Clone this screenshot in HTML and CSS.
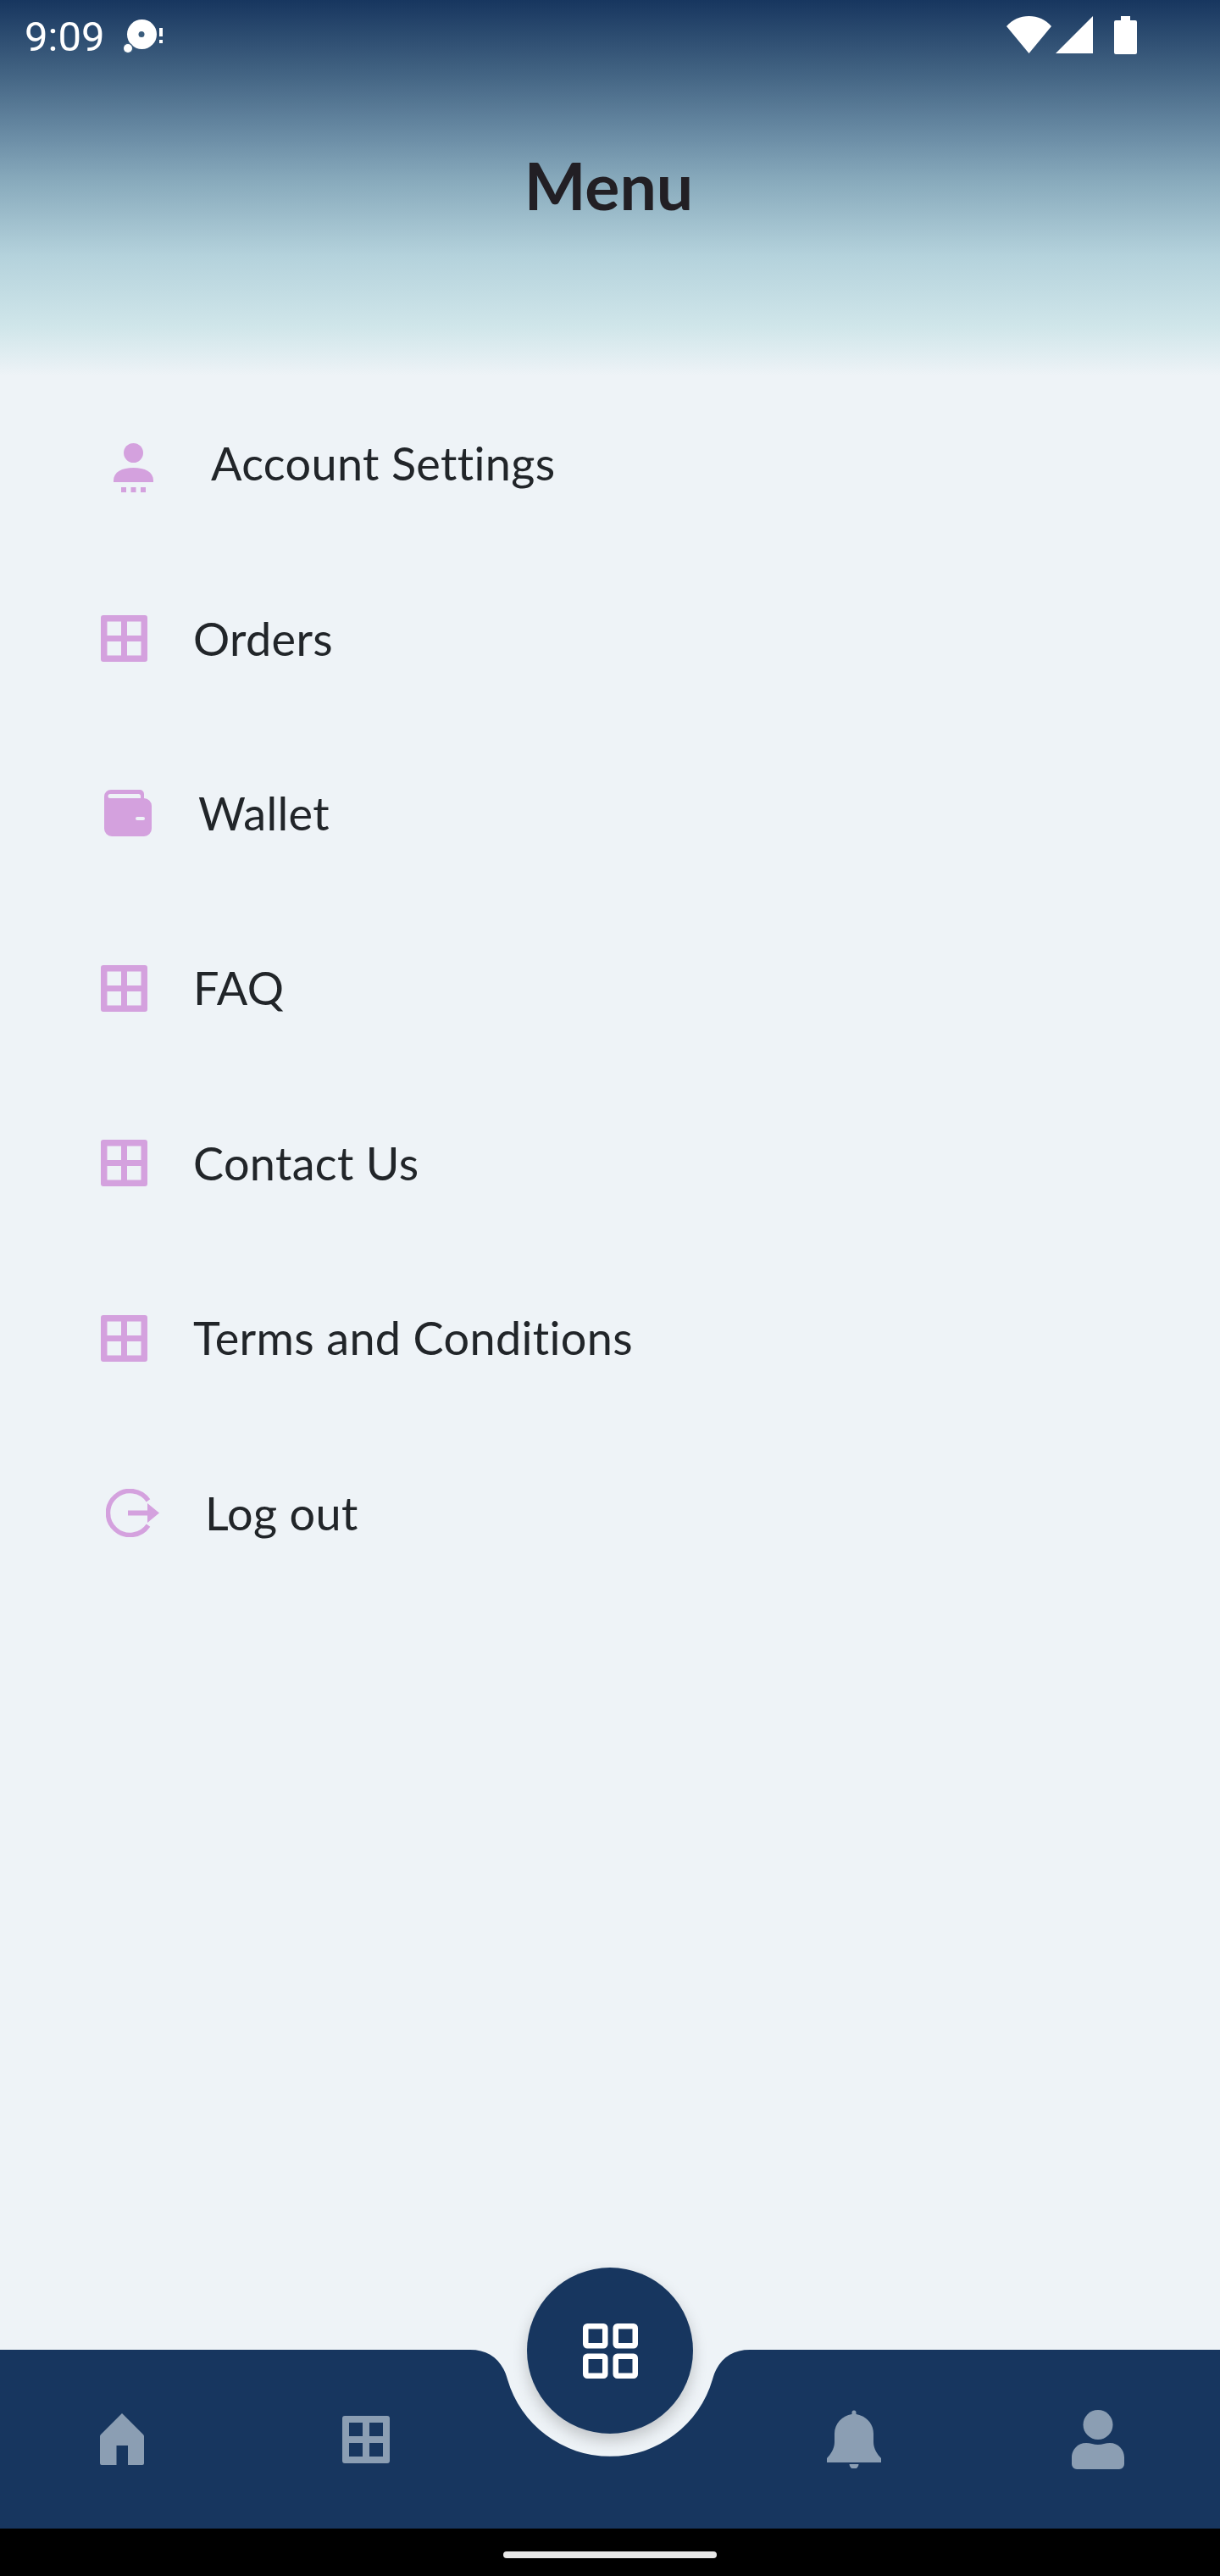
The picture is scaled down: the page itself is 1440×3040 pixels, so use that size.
FILE: index.html
```html
<!DOCTYPE html>
<html lang="en">
<head>
<meta charset="utf-8">
<title>Menu</title>
<link rel="stylesheet" href="styles.css">
</head>
<body>
<div class="screen">
  <header class="header">
    <div class="status">
      <div class="status-left">
        <span class="time">9:09</span>
        <svg class="notif" viewBox="0 0 48 40" width="48" height="40"><circle cx="21.500" cy="17.500" r="17.500" fill="#fff"/><circle cx="21" cy="17.500" r="3.500" fill="#3a5c7c"/><circle cx="5" cy="34" r="6.500" fill="#3f6080"/><circle cx="5" cy="34" r="5" fill="#fff"/><rect x="42" y="10" width="4" height="10" fill="#fff"/><rect x="42" y="24" width="4" height="4" fill="#fff"/></svg>
      </div>
      <div class="status-right">
        <svg viewBox="0 0 53 44" width="53" height="44"><path d="M0 12C7 4 16 0 26.500 0S46 4 53 12L26.500 44Z" fill="#fff"/></svg>
        <svg viewBox="0 0 44 44" width="44" height="44"><path d="M44 0V44H0Z" fill="#fff"/></svg>
        <svg class="battery" viewBox="0 0 27 45" width="27" height="45"><path d="M8 0H19V5H25A2 2 0 0 1 27 7V43A2 2 0 0 1 25 45H2A2 2 0 0 1 0 43V7A2 2 0 0 1 2 5H8Z" fill="#fff"/></svg>
      </div>
    </div>
    <h1 class="title">Menu</h1>
  </header>

  <main class="menu">
    <a class="row row-account">
      <svg class="ic" viewBox="0 0 47 58" width="47" height="58"><circle cx="23.500" cy="11.500" r="11.500" fill="#d4a1de"/><path d="M0 46V44C0 34 10 29 23.500 29S47 34 47 44V46Z" fill="#d4a1de"/><rect x="9" y="52" width="6" height="6" fill="#d4a1de"/><rect x="20.500" y="52" width="6" height="6" fill="#d4a1de"/><rect x="32" y="52" width="6" height="6" fill="#d4a1de"/></svg>
      <span>Account Settings</span>
    </a>
    <a class="row row-grid">
      <svg class="ic" viewBox="0 0 55 55" width="55" height="55"><path fill-rule="evenodd" d="M3 0H52A3 3 0 0 1 55 3V52A3 3 0 0 1 52 55H3A3 3 0 0 1 0 52V3A3 3 0 0 1 3 0ZM7.500 7.500V24H24V7.500ZM31 7.500V24H47.500V7.500ZM7.500 31V47.500H24V31ZM31 31V47.500H47.500V31Z" fill="#d4a1de"/></svg>
      <span>Orders</span>
    </a>
    <a class="row row-wallet">
      <svg class="ic" viewBox="0 0 56 55" width="56" height="55"><path fill-rule="evenodd" d="M8 0H42A5 5 0 0 1 47 5V10A9 9 0 0 1 56 19V46A9 9 0 0 1 47 55H9A9 9 0 0 1 0 46V8A8 8 0 0 1 8 0ZM7 5A2.500 2.500 0 0 0 7 10H43V7.500A2.500 2.500 0 0 0 40.500 5ZM39 32A2 2 0 0 0 39 36H46A2 2 0 0 0 46 32Z" fill="#d4a1de"/></svg>
      <span>Wallet</span>
    </a>
    <a class="row row-grid">
      <svg class="ic" viewBox="0 0 55 55" width="55" height="55"><path fill-rule="evenodd" d="M3 0H52A3 3 0 0 1 55 3V52A3 3 0 0 1 52 55H3A3 3 0 0 1 0 52V3A3 3 0 0 1 3 0ZM7.500 7.500V24H24V7.500ZM31 7.500V24H47.500V7.500ZM7.500 31V47.500H24V31ZM31 31V47.500H47.500V31Z" fill="#d4a1de"/></svg>
      <span>FAQ</span>
    </a>
    <a class="row row-grid">
      <svg class="ic" viewBox="0 0 55 55" width="55" height="55"><path fill-rule="evenodd" d="M3 0H52A3 3 0 0 1 55 3V52A3 3 0 0 1 52 55H3A3 3 0 0 1 0 52V3A3 3 0 0 1 3 0ZM7.500 7.500V24H24V7.500ZM31 7.500V24H47.500V7.500ZM7.500 31V47.500H24V31ZM31 31V47.500H47.500V31Z" fill="#d4a1de"/></svg>
      <span>Contact Us</span>
    </a>
    <a class="row row-grid">
      <svg class="ic" viewBox="0 0 55 55" width="55" height="55"><path fill-rule="evenodd" d="M3 0H52A3 3 0 0 1 55 3V52A3 3 0 0 1 52 55H3A3 3 0 0 1 0 52V3A3 3 0 0 1 3 0ZM7.500 7.500V24H24V7.500ZM31 7.500V24H47.500V7.500ZM7.500 31V47.500H24V31ZM31 31V47.500H47.500V31Z" fill="#d4a1de"/></svg>
      <span>Terms and Conditions</span>
    </a>
    <a class="row row-logout">
      <svg class="ic" viewBox="0 0 63 57" width="63" height="57"><path d="M50 13.900A26 26 0 1 0 50 43.100" fill="none" stroke="#d4a1de" stroke-width="5.500"/><rect x="26" y="25.500" width="25" height="6" fill="#d4a1de"/><path d="M49 17L63 28.500L49 40Z" fill="#d4a1de"/></svg>
      <span>Log out</span>
    </a>
  </main>

  <nav class="nav">
    <svg class="nav-shape" viewBox="0 0 1440 211" width="1440" height="211"><path d="M0 0H555C577 0 593 12 599 35A126 126 0 0 0 841 35C847 12 863 0 885 0H1440V211H0Z" fill="#17365f"/></svg>
    <button class="fab" type="button" aria-label="Menu">
      <svg viewBox="0 0 65 65" width="65" height="65"><g fill="none" stroke="#fff" stroke-width="6.500"><rect x="3.250" y="3.250" width="23" height="23" rx="2"/><rect x="38.750" y="3.250" width="23" height="23" rx="2"/><rect x="3.250" y="38.750" width="23" height="23" rx="2"/><rect x="38.750" y="38.750" width="23" height="23" rx="2"/></g></svg>
    </button>
    <div class="nav-items">
      <span class="nav-item"><svg viewBox="0 0 52 61" width="52" height="61"><path fill-rule="evenodd" d="M26 0L51 25A3 3 0 0 1 52 27V59A2 2 0 0 1 50 61H33V38H19.500V61H2A2 2 0 0 1 0 59V27A3 3 0 0 1 1 25Z" fill="#8b9eb3"/></svg></span>
      <span class="nav-item"><svg viewBox="0 0 56 56" width="56" height="56"><path fill-rule="evenodd" d="M3 0H53A3 3 0 0 1 56 3V53A3 3 0 0 1 53 56H3A3 3 0 0 1 0 53V3A3 3 0 0 1 3 0ZM8 8V24H24V8ZM32 8V24H48V8ZM8 32V48H24V32ZM32 32V48H48V32Z" fill="#8b9eb3"/></svg></span>
      <span class="nav-gap"></span>
      <span class="nav-item"><svg viewBox="0 0 64 69" width="64" height="69"><path d="M29.500 3A2.500 2.500 0 0 1 34.500 3V5C46 7 55 16 55 28V38C55 46 60 53 64 57V62H0V57C4 53 9 46 9 38V28C9 16 18 7 29.500 5Z" fill="#8b9eb3"/><path d="M26.500 64H37.500A5.500 5.500 0 0 1 26.500 64Z" fill="#8b9eb3"/></svg></span>
      <span class="nav-item"><svg viewBox="0 0 62 70" width="62" height="70"><circle cx="31" cy="17.500" r="17.500" fill="#8b9eb3"/><path d="M17 39C22 39 26 41 31 41S40 39 45 39C55 39 62 47 62 56V64A6 6 0 0 1 56 70H6A6 6 0 0 1 0 64V56C0 47 7 39 17 39Z" fill="#8b9eb3"/></svg></span>
    </div>
  </nav>

  <footer class="sysbar"><span class="home-bar"></span></footer>
</div>
</body>
</html>
```
FILE: styles.css
```css
* { box-sizing: border-box; }
html, body { margin: 0; padding: 0; }
body { background: #eef3f7; font-family: "Lato", sans-serif; }
.screen { width: 1440px; height: 3040px; display: flex; flex-direction: column; overflow: hidden; }

.header {
  height: 444px;
  flex: none;
  background: linear-gradient(180deg, #17365f 0%, #3f6080 18%, #6a8ca5 36%, #88aabc 48%, #b4d2dc 68%, #d0e6ea 87%, #eef3f7 100%);
}
.status { height: 84px; padding: 0 98px 0 29px; display: flex; justify-content: space-between; align-items: flex-start; color: #fff; }
.status-left { display: flex; align-items: flex-start; gap: 23px; }
.time { font: 400 49px/56px "Roboto", sans-serif; margin-top: 16px; }
.notif { margin-top: 23px; }
.status-right { display: flex; align-items: flex-start; gap: 5px; padding-top: 19px; }
.battery { margin-left: 20px; }
.title { margin: 96px 0 0; padding-right: 3px; text-align: center; font: 700 77px/76px "Lato", sans-serif; color: #221f24; }

.menu { flex: 1; display: flex; flex-direction: column; }
.row { height: 206.400px; display: flex; align-items: center; font: 400 54px/64px "Lato", sans-serif; font-variant-ligatures: none; letter-spacing: .35px; color: #212529; flex: none; }
.row-account { padding-left: 134px; gap: 68px; }
.row-account .ic { margin-top: 10px; }
.row-grid { padding-left: 119px; gap: 54px; }
.row-wallet { padding-left: 123px; gap: 55px; }
.row-logout { padding-left: 125px; gap: 54px; }

.nav { position: relative; height: 211px; flex: none; }
.nav-shape { position: absolute; left: 0; top: 0; display: block; }
.fab {
  position: absolute; left: 622px; top: -97px; width: 196px; height: 196px;
  border: 0; border-radius: 50%; padding: 0; background: #17365f;
  display: flex; align-items: center; justify-content: center;
  box-shadow: 0 8px 18px rgba(0, 0, 0, .2);
}
.nav-items { position: relative; height: 100%; display: grid; grid-template-columns: repeat(5, 288px); align-items: center; justify-items: center; }
.nav-item { display: flex; }
.nav-item svg { display: block; }

.sysbar { height: 56px; flex: none; background: #000; display: flex; justify-content: center; padding-top: 27px; }
.home-bar { width: 252px; height: 8px; border-radius: 4px; background: #e8e8e8; }
```
